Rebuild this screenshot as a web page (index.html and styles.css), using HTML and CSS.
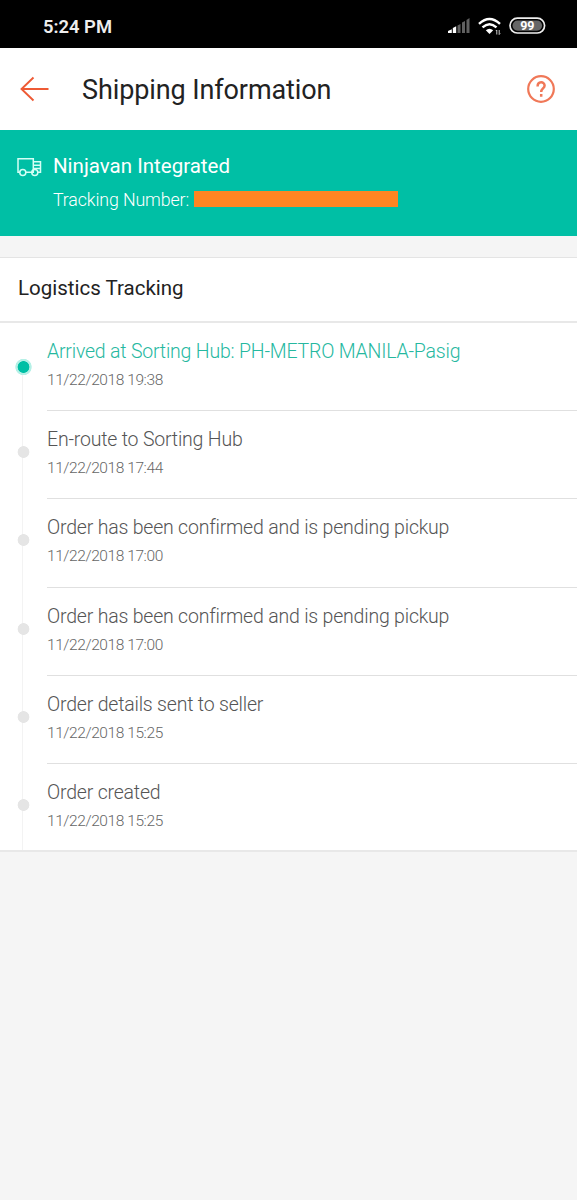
FILE: index.html
```html
<!DOCTYPE html>
<html lang="en">
<head>
<meta charset="utf-8">
<title>Shipping Information</title>
<link rel="stylesheet" href="styles.css">
</head>
<body>
<header class="status">
  <span class="clock">5:24 PM</span>
  <svg class="status-icons" width="100" height="20" viewBox="0 0 100 20">
    <path fill="#fff" d="M0 18v-2l3.800-1.800V18zM4.800 18v-5l3.400-1.800V18z"/>
    <path fill="#606060" d="M9.500 18v-7.500l3-1.500V18zM14 18V7.500L17 6v12zM18.500 18V5l3-2v15z"/>
    <g fill="none" stroke="#fff" stroke-width="2.400">
      <path d="M31 8.900Q41.500-1.100 52 8.900M34.500 12.400q7-6.500 14 0"/>
    </g>
    <path fill="#fff" d="M37.800 15.300q3.700-3 7.400 0l-3.700 3.700z"/>
    <path fill="none" stroke="#ccc" stroke-width="1" d="M48.800 19.500V15l-1 1M51.200 15v4.500l1-1"/>
    <rect x="62" y="3.200" width="34.600" height="14.800" rx="7.400" fill="#000" stroke="#eee" stroke-width="1.700"/>
    <rect x="64.500" y="5.500" width="29.600" height="10.200" rx="5.100" fill="#666"/>
    <text class="battery-level" x="79.300" y="14.800" text-anchor="middle">99</text>
  </svg>
</header>
<nav class="navbar">
  <svg class="back" width="30" height="26" viewBox="0 0 30 26"><path d="M28.500 13H1.500M13.500 1.500 1.500 13l12 11.500"/></svg>
  <h1 class="title">Shipping Information</h1>
  <svg class="help" width="30" height="30" viewBox="0 0 30 30"><circle cx="15" cy="15" r="12.800"/><path class="mark" d="M11.600 12.400c0-5.400 7-5.200 7-.8 0 2.900-3.400 2.900-3.400 6.400M15.200 20v2.700"/></svg>
</nav>
<section class="carrier">
  <svg class="truck" width="26" height="20" viewBox="0 0 26 20"><path d="M4 15.200H2V1.800h15.300v13.400H9.800M17.300 4.800h7.200v10.400h-2.500M18 8.200h6.500M18 11.400h6.500"/><circle cx="6.800" cy="15.500" r="3"/><circle cx="18.800" cy="15.500" r="3"/></svg>
  <div>
    <div class="carrier-name">Ninjavan Integrated</div>
    <div class="tracking"><span class="tracking-label">Tracking Number:</span><span class="redacted"></span></div>
  </div>
</section>
<main class="panel">
  <h2 class="heading">Logistics Tracking</h2>
  <ol class="events">
    <li class="event current"><i class="rail"></i><div class="detail"><p class="what">Arrived at Sorting Hub: PH-METRO MANILA-Pasig</p><p class="when">11/22/2018 19:38</p></div></li>
    <li class="event"><i class="rail"></i><div class="detail"><p class="what">En-route to Sorting Hub</p><p class="when">11/22/2018 17:44</p></div></li>
    <li class="event"><i class="rail"></i><div class="detail"><p class="what">Order has been confirmed and is pending pickup</p><p class="when">11/22/2018 17:00</p></div></li>
    <li class="event"><i class="rail"></i><div class="detail"><p class="what">Order has been confirmed and is pending pickup</p><p class="when">11/22/2018 17:00</p></div></li>
    <li class="event"><i class="rail"></i><div class="detail"><p class="what">Order details sent to seller</p><p class="when">11/22/2018 15:25</p></div></li>
    <li class="event"><i class="rail"></i><div class="detail"><p class="what">Order created</p><p class="when">11/22/2018 15:25</p></div></li>
  </ol>
</main>
</body>
</html>
```
FILE: styles.css
```css
* { box-sizing: border-box; }
body { margin: 0; min-height: 1200px; background: #f5f5f5; font-family: Roboto, "Liberation Sans", sans-serif; color: #222; }
h1, h2, p, ol { margin: 0; padding: 0; font-weight: 400; }
svg { display: block; flex: none; }
.status { height: 48px; background: #000; display: flex; justify-content: space-between; padding: 15px 29px 0 43px; }
.clock { color: #eee; font-size: 18.400px; line-height: 23px; font-weight: 600; }
.battery-level { fill: #fff; font-size: 12.500px; font-weight: 700; }
.navbar { height: 82px; background: #fff; display: flex; align-items: center; padding: 0 21px 0 20px; }
.back { fill: none; stroke: #ee5a35; stroke-width: 1.900; }
.title { flex: 1; margin-left: 32px; font-size: 27px; letter-spacing: -.1px; line-height: 32px; padding-top: 2px; white-space: nowrap; }
.help { fill: none; stroke: #f07858; stroke-width: 2.200; }
.mark { stroke-width: 2.500; }
.carrier { height: 106px; background: #00bfa5; color: #fff; display: flex; gap: 11px; padding: 24px 16px 0; }
.truck { margin-top: 3px; fill: none; stroke: #d5fff5; stroke-width: 1.500; }
.carrier-name { font-size: 20.500px; line-height: 24px; white-space: nowrap; }
.tracking { display: flex; align-items: center; gap: 5px; margin-top: 9px; height: 24px; }
.tracking-label { font-size: 17.800px; letter-spacing: -.12px; font-weight: 300; white-space: nowrap; }
.redacted { width: 204px; height: 16px; background: #ff8522; }
.panel { margin-top: 21px; background: #fff; border-top: 1px solid #e4e4e4; border-bottom: 2px solid #e8e8e8; }
.heading { height: 65px; border-bottom: 2px solid #e8e8e8; padding: 17px 18px; font-size: 20.500px; line-height: 26px; }
.events { list-style: none; }
.event { display: flex; height: 88.200px; color: #555; }
.event:last-child { height: 86px; }
.rail { width: 47px; flex: none; background: radial-gradient(circle at 23.500px 41px, #e5e5e5 5.500px, transparent 6.200px), linear-gradient(#f3f3f3, #f3f3f3) 22px 0 / 1px 100% no-repeat; }
.current .rail { background: radial-gradient(circle at 23.500px 44px, #00bfa5 5.500px, #b5f0e6 6.200px, #b5f0e6 7.800px, transparent 8.500px), linear-gradient(#f3f3f3, #f3f3f3) 22px 44px / 1px 100% no-repeat; }
.detail { flex: 1; padding-top: 16px; border-bottom: 1.500px solid #e0e0e0; }
.event:last-child .detail { border-bottom: 0; }
.what { font-size: 19.500px; letter-spacing: -.2px; line-height: 26px; font-weight: 300; white-space: nowrap; }
.when { margin-top: 4px; font-size: 15.500px; letter-spacing: -.42px; line-height: 22px; font-weight: 300; color: #666; }
.current .what { color: #26b89f; }
```
